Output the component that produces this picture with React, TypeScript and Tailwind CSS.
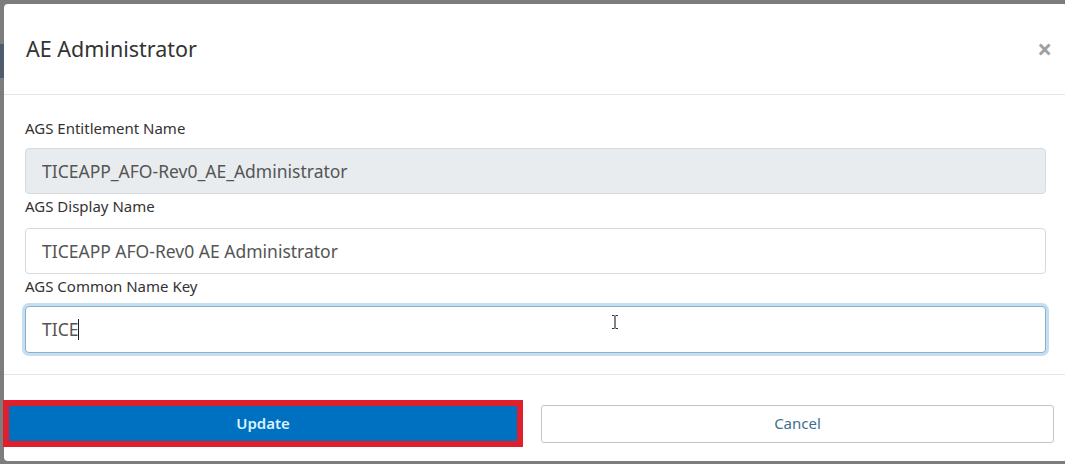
import React from "react";

const font = { fontFamily: '"Segoe UI", "Noto Sans", sans-serif' };

export default function App() {
  return (
    <div className="relative w-[1065px] h-[464px] overflow-hidden bg-[#7d7d7d]" style={font}>
      {/* dimmed page behind backdrop */}
      <div className="absolute left-0 top-[44px] w-[4px] h-[34px] bg-[#4d5d6c]" />
      <div className="pt-[4px] pl-[4px]">
        <div className="w-[1063px] h-[457px] bg-white rounded-[4px] flex flex-col">
          {/* header */}
          <div className="h-[91px] flex items-center justify-between pl-[22px] pr-[15px] border-b border-[#e5e5e5]">
            <h1 className="text-[21.5px] text-[#333] leading-none">AE Administrator</h1>
            <span className="text-[26px] font-bold text-[#a0a0a0] leading-none">×</span>
          </div>
          {/* body */}
          <div className="px-[21px] pt-[23px] pb-[21px] flex flex-col border-b border-[#e5e5e5]">
            <label className="text-[15px] leading-[20px] text-[#333] mb-[10px]">AGS Entitlement Name</label>
            <div className="h-[46px] rounded-[4px] border border-[#d6dadf] bg-[#e9ecef] flex items-center px-[16px] text-[17.5px] text-[#555]">
              TICEAPP_AFO-Rev0_AE_Administrator
            </div>
            <label className="text-[15px] leading-[20px] text-[#333] mt-[2px] mb-[12px]">AGS Display Name</label>
            <div className="h-[46px] rounded-[4px] border border-[#d6dadf] bg-white flex items-center px-[16px] text-[17.5px] text-[#555]">
              TICEAPP AFO-Rev0 AE Administrator
            </div>
            <label className="text-[15px] leading-[20px] text-[#333] mt-[2px] mb-[10px]">AGS Common Name Key</label>
            <div className="relative h-[47px] rounded-[4px] border border-[#88b0cf] shadow-[0_0_0_3px_#c6deef] bg-white flex items-center px-[16px] text-[17.5px] text-[#555]">
              <span>TICE</span>
              <span className="inline-block w-[1px] h-[21px] bg-[#222]" />
              <svg className="absolute left-[584px] top-[7px]" width="10" height="16" viewBox="0 0 10 16">
                <path d="M2 1.5h2.5M5.5 1.5H8M2 14.5h2.5M5.5 14.5H8M5 2v12" stroke="#333" strokeWidth="1.2" fill="none" />
              </svg>
            </div>
          </div>
          {/* footer */}
          <div className="flex items-center pt-[25px] ml-[-1px]">
            <button className="w-[520px] h-[47px] border-[6px] border-[#e01f2c] bg-[#0070c0] text-[#d9f3ff] text-[15px] font-semibold">
              Update
            </button>
            <button className="ml-[18px] w-[513px] h-[38px] rounded-[3px] border border-[#c4c4c4] bg-white text-[#3b7090] text-[15px]">
              Cancel
            </button>
          </div>
        </div>
      </div>
    </div>
  );
}
